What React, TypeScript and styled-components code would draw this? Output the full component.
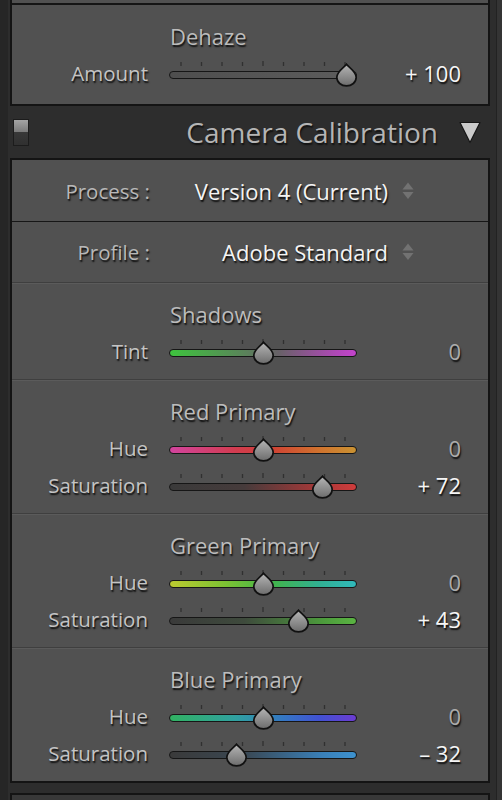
import React, { useId } from "react";
import styled, { createGlobalStyle } from "styled-components";

const GlobalStyle = createGlobalStyle`
  html, body {
    margin: 0;
    padding: 0;
    background: #262626;
  }
  body {
    font-family: "Open Sans", "Noto Sans", sans-serif;
    -webkit-font-smoothing: antialiased;
  }
`;

const Page = styled.div`
  display: flex;
  height: 800px;
  padding-left: 8px;
  overflow: hidden;
`;

const Column = styled.div`
  flex: 0 0 488px;
  box-sizing: border-box;
  background: #2d2d2d;
  padding: 0 6px 0 2px;
`;

const ScrollTrack = styled.div`
  flex: 1;
  background: #343434;
  border-left: 1px solid #222;
`;

const Panel = styled.div<{ $cut?: boolean }>`
  background: #515151;
  border: 2px solid #141414;
  border-top-width: ${(p) => (p.$cut ? 0 : 2)}px;
`;

const PrevSection = styled.div`
  height: 3px;
`;

const NextPanel = styled.div`
  margin-top: 10px;
  height: 20px;
  background: #383838;
  border: 2px solid #141414;
  border-bottom: none;
`;

const Section = styled.div<{ $line?: "black" | "groove"; $pb?: number }>`
  padding: 17px 0 ${(p) => p.$pb ?? 8}px;
  border-top: ${(p) =>
    p.$line === "black" ? "2px solid #151515" : "1px solid #3f3f3f"};
  box-shadow: ${(p) => (p.$line === "groove" ? "inset 0 1px 0 #5b5b5b" : "none")};
`;

const Grid = styled.div<{ $h: number }>`
  display: grid;
  grid-template-columns: 136px 188px 83px;
  column-gap: 21px;
  align-items: center;
  height: ${(p) => p.$h}px;
`;

const shadow = "1px 1.5px 1.5px rgba(0, 0, 0, 0.85)";

const Title = styled.div`
  grid-column: 2 / span 2;
  padding-left: 1px;
  font-size: 22px;
  line-height: 28px;
  color: #bcbcbc;
  text-shadow: ${shadow};
  white-space: nowrap;
`;

const Label = styled.div`
  text-align: right;
  font-size: 20.5px;
  line-height: 28px;
  padding-bottom: 3px;
  color: #c4c4c4;
  text-shadow: ${shadow};
  white-space: nowrap;
`;

const Value = styled.div<{ $zero: boolean }>`
  text-align: right;
  font-size: 22px;
  line-height: 28px;
  padding-bottom: 3px;
  color: ${(p) => (p.$zero ? "#acacac" : "#f6f6f6")};
  text-shadow: ${shadow};
  white-space: nowrap;
`;

const SliderBox = styled.div`
  position: relative;
  height: 37px;
`;

const Track = styled.div<{ $bg: string }>`
  box-sizing: border-box;
  margin-top: 14.5px;
  height: 8px;
  border-radius: 4px;
  border: 1px solid #161616;
  background: ${(p) => p.$bg};
`;

const Ticks = styled.svg`
  position: absolute;
  left: 0;
  top: 5px;
`;

const Thumb = styled.svg`
  position: absolute;
  top: 6.5px;
`;

const PopupRow = styled.div<{ $line?: boolean }>`
  display: flex;
  align-items: center;
  height: ${(p) => (p.$line ? 60 : 61)}px;
  border-top: ${(p) => (p.$line ? "1px solid #161616" : "none")};
`;

const PopupLabel = styled.div`
  flex: 0 0 138px;
  text-align: right;
  font-size: 20.5px;
  line-height: 28px;
  color: #b8b8b8;
  text-shadow: ${shadow};
`;

const PopupValue = styled.div`
  flex: 0 0 238px;
  text-align: right;
  font-size: 22px;
  line-height: 28px;
  color: #f4f4f4;
  text-shadow: ${shadow};
  white-space: nowrap;
`;

const Stepper = styled.svg`
  margin-left: 14px;
`;

const Header = styled.div`
  height: 52px;
  display: flex;
  align-items: center;
  padding: 0 9px 0 3px;
`;

const Toggle = styled.div`
  box-sizing: border-box;
  width: 16px;
  height: 27px;
  border: 1px solid #1c1c1c;
  background: linear-gradient(
    to bottom,
    #a4a4a4 0,
    #7c7c7c 46%,
    #383838 50%,
    #303030 100%
  );
`;

const HeaderTitle = styled.div`
  margin-left: auto;
  font-size: 28px;
  line-height: 34px;
  color: #b5b5b5;
  text-shadow: 1px 1.5px 1.5px #111;
`;

const Disclosure = styled.svg`
  margin-left: 21px;
`;

type SliderDef = { label: string; value: number; track: string };
type SectionDef = { title: string; sliders: SliderDef[] };

const grayTrack = "linear-gradient(to right, #4e4e4e, #5d5d5d)";

const calibration: SectionDef[] = [
  {
    title: "Shadows",
    sliders: [
      {
        label: "Tint",
        value: 0,
        track:
          "linear-gradient(to right, #3ec43e, #5a835a 40%, #676267 58%, #b048b8 90%, #c443cc)",
      },
    ],
  },
  {
    title: "Red Primary",
    sliders: [
      {
        label: "Hue",
        value: 0,
        track:
          "linear-gradient(to right, #d2449e, #d23c50 35%, #cf4234 55%, #d0722e 80%, #c99232)",
      },
      {
        label: "Saturation",
        value: 72,
        track:
          "linear-gradient(to right, #3a3a3a, #463b3b 40%, #ad3838 82%, #cf3c3c)",
      },
    ],
  },
  {
    title: "Green Primary",
    sliders: [
      {
        label: "Hue",
        value: 0,
        track:
          "linear-gradient(to right, #bccb30, #7cc233 30%, #42b44a 55%, #31b092 80%, #30b9bb)",
      },
      {
        label: "Saturation",
        value: 43,
        track:
          "linear-gradient(to right, #3a3a3a, #3e4a3c 40%, #4c9a3c 82%, #5ab442)",
      },
    ],
  },
  {
    title: "Blue Primary",
    sliders: [
      {
        label: "Hue",
        value: 0,
        track:
          "linear-gradient(to right, #31b262, #30a1a0 35%, #3478c2 60%, #4152d2 80%, #6c3cd2)",
      },
      {
        label: "Saturation",
        value: -32,
        track:
          "linear-gradient(to right, #3a3a3a, #3a4752 40%, #3a80b8 82%, #3d92cf)",
      },
    ],
  },
];

const formatValue = (v: number) => {
  if (v > 0) return `+ ${v}`;
  if (v < 0) return `\u2013 ${-v}`;
  return "0";
};

const tickXs = [-4, -3, -2, -1, 0, 1, 2, 3, 4].map((k) => 94 + k * 20.5);

const Slider = ({ value, track }: { value: number; track: string }) => {
  const id = useId();
  const center = 94 + (value / 100) * 83;

  return (
    <SliderBox>
      <Ticks width="188" height="6" viewBox="0 0 188 6">
        {tickXs.map((x, i) => (
          <line
            key={i}
            x1={x}
            x2={x}
            y1={i === 4 ? 0 : 1}
            y2={5}
            stroke="#303030"
            strokeWidth="1.3"
          />
        ))}
      </Ticks>
      <Track $bg={track} />
      <Thumb
        width="23"
        height="24"
        viewBox="0 0 23 24"
        style={{ left: center - 11.5 }}
      >
        <defs>
          <linearGradient id={id} x1="0" y1="0" x2="0" y2="1">
            <stop offset="0" stopColor="#b6b6b6" />
            <stop offset="1" stopColor="#6c6c6c" />
          </linearGradient>
        </defs>
        <path
          d="M11.5 1.2 C13.6 4 21.2 8.6 21.2 14.2 C21.2 19.4 16.8 22.9 11.5 22.9 C6.2 22.9 1.8 19.4 1.8 14.2 C1.8 8.6 9.4 4 11.5 1.2 Z"
          fill={`url(#${id})`}
          stroke="#111"
          strokeWidth="1.7"
        />
      </Thumb>
    </SliderBox>
  );
};

const SliderRow = ({ def }: { def: SliderDef }) => (
  <Grid $h={37}>
    <Label>{def.label}</Label>
    <Slider value={def.value} track={def.track} />
    <Value $zero={def.value === 0}>{formatValue(def.value)}</Value>
  </Grid>
);

const SliderSection = ({
  def,
  line,
  pb,
}: {
  def: SectionDef;
  line?: "black" | "groove";
  pb?: number;
}) => (
  <Section $line={line} $pb={pb}>
    <Grid $h={28}>
      <span />
      <Title>{def.title}</Title>
    </Grid>
    <div style={{ height: 6 }} />
    {def.sliders.map((s, i) => (
      <SliderRow key={i} def={s} />
    ))}
  </Section>
);

const UpDown = () => (
  <Stepper width="12" height="18" viewBox="0 0 12 18">
    <polygon points="0.5,7.5 6,0.5 11.5,7.5" fill="#727272" />
    <polygon points="0.5,10 11.5,10 6,17" fill="#727272" />
  </Stepper>
);

function App() {
  return (
    <Page>
      <GlobalStyle />
      <Column>
        <Panel $cut>
          <PrevSection />
          <SliderSection
            line="black"
            pb={11}
            def={{
              title: "Dehaze",
              sliders: [{ label: "Amount", value: 100, track: grayTrack }],
            }}
          />
        </Panel>

        <Header>
          <Toggle />
          <HeaderTitle>Camera Calibration</HeaderTitle>
          <Disclosure width="22" height="23" viewBox="0 0 22 23">
            <polygon
              points="1,1.5 21,1.5 11,21.5"
              fill="#cacaca"
              stroke="#161616"
              strokeWidth="1.2"
              strokeLinejoin="round"
            />
          </Disclosure>
        </Header>

        <Panel>
          <PopupRow>
            <PopupLabel>Process :</PopupLabel>
            <PopupValue>Version 4 (Current)</PopupValue>
            <UpDown />
          </PopupRow>
          <PopupRow $line>
            <PopupLabel>Profile :</PopupLabel>
            <PopupValue>Adobe Standard</PopupValue>
            <UpDown />
          </PopupRow>
          {calibration.map((sec) => (
            <SliderSection key={sec.title} def={sec} line="groove" pb={8} />
          ))}
        </Panel>

        <NextPanel />
      </Column>
      <ScrollTrack />
    </Page>
  );
}

export default App;
